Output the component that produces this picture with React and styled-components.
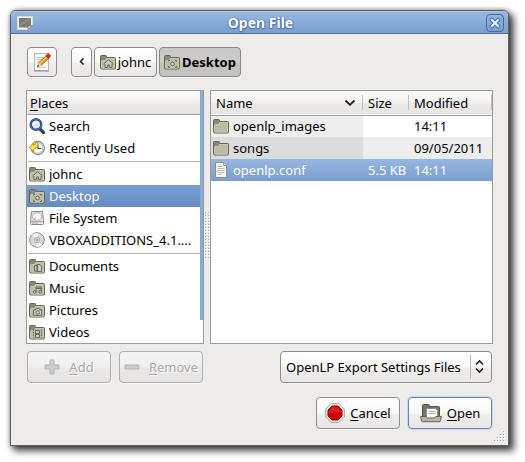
import React, { useState } from "react";
import styled, { createGlobalStyle, css } from "styled-components";

const GlobalStyle = createGlobalStyle`
  * { box-sizing: border-box; }
  body {
    margin: 0;
    background: #fff;
    color: #000;
    font: 13px/16px "Noto Sans", "Open Sans", sans-serif;
  }
  button, select { font: inherit; color: inherit; margin: 0; }
  u { text-decoration-thickness: 1px; text-underline-offset: 2px; }
`;

const Page = styled.div`
  padding: 10px 16px 16px 10px;
`;

const Window = styled.section`
  border: 1px solid #5f5e5c;
  border-radius: 6px 6px 0 0;
  background: #edeceb;
  box-shadow: 4px 4px 7px 1px rgba(0, 0, 0, 0.7), 0 0 4px rgba(0, 0, 0, 0.4);
`;

const TitleBar = styled.header`
  display: grid;
  grid-template-columns: 24px 1fr 24px;
  align-items: center;
  height: 23px;
  padding: 0 4px 0 6px;
  border-top: 1px solid #a9c5ea;
  border-bottom: 1px solid #4b6fa5;
  border-radius: 5px 5px 0 0;
  background: linear-gradient(#97b8e2, #7a9fd0);
`;

const Title = styled.h1`
  margin: 0;
  font-size: 14px;
  line-height: 20px;
  font-weight: 700;
  text-align: center;
  color: #fff;
  text-shadow: 0 0 1px #41659a, 0 1px 2px #41659a, 1px 0 1px #5478ad;
`;

const CloseButton = styled.button`
  display: grid;
  place-items: center;
  justify-self: end;
  width: 18px;
  height: 18px;
  padding: 0;
  border: 1px solid #45699f;
  border-radius: 4px;
  background: linear-gradient(#94b5e0, #7b9fcf);
`;

const Content = styled.div`
  display: flex;
  flex-direction: column;
  padding: 13px 15px 0;
`;

const PathBar = styled.nav`
  display: flex;
  gap: 2px;
  padding-left: 1px;
  margin-bottom: 13px;
`;

const PushButton = styled.button`
  display: flex;
  align-items: center;
  justify-content: center;
  gap: ${(p) => p.$gap || 3}px;
  min-width: 0;
  height: ${(p) => (p.$tall ? 32 : 30)}px;
  padding: 0 4px;
  border: 1px solid #8f8d89;
  border-radius: 4px;
  background: linear-gradient(#fff, #f8f8f7 50%, #efeeed 55%, #e8e7e5);
  box-shadow: 0 1px 0 #f8f8f8;
  white-space: nowrap;

  ${(p) => p.$active && css`
    border-color: #8a8884;
    background: linear-gradient(#c9c7c5, #cfcdcb 50%, #c4c2bf 55%, #c6c4c1);
    font-weight: 700;
  `}
  ${(p) => p.$primary && css`
    border-color: #6685b5;
    box-shadow: 0 0 0 1px #c9d8ec;
  `}
  &:disabled {
    border-color: #b1afac;
    background: linear-gradient(#f6f5f5, #f0efee 50%, #e9e8e7 55%, #e5e4e2);
    color: #aaa8a5;
    text-shadow: 1px 1px 0 #fff;
  }
`;

const EditButton = styled(PushButton)`
  width: 30px;
  margin-right: 12px;
`;
const BackButton = styled(PushButton)`
  width: 21px;
`;
const CrumbButton = styled(PushButton)`
  flex: 0 0 auto;
  width: ${(p) => (p.$active ? 82 : 63)}px;
  gap: 2px;
  svg { flex: none; }
`;

const Panes = styled.div`
  display: flex;
  align-items: stretch;
`;

const headerFill = css`
  height: 24px;
  border-bottom: 1px solid #a09e9b;
  background: linear-gradient(#fbfbfa, #f3f2f1 50%, #ebeae9 55%, #e6e5e3);
`;

const Places = styled.aside`
  position: relative;
  flex: 0 0 178px;
  border: 1px solid #9c9a97;
  background: #fff;
`;

const PlacesHeader = styled.h2`
  ${headerFill}
  margin: 0;
  padding: 4px 3px;
  font: inherit;
`;

const ScrollMark = styled.span`
  position: absolute;
  top: 0;
  right: 0;
  width: 3px;
  height: 91%;
  background: #86abd9;
`;

const PlaceGroup = styled.ul`
  list-style: none;
  margin: 0 3px 0 0;
  padding: 0;
  & + & { padding-top: 4px; background: linear-gradient(#b6b4b2, #b6b4b2) 1px 2px / 100% 1px no-repeat; }
`;

const PlaceButton = styled.button`
  display: flex;
  align-items: center;
  gap: 4px;
  width: 100%;
  height: 22px;
  padding: 0 0 0 2px;
  border: 0;
  background: ${(p) => (p.$selected ? "linear-gradient(#7ba0d2, #648bc2)" : "none")};
  color: ${(p) => (p.$selected ? "#fff" : "#000")};
  text-align: left;
  svg { flex: none; }
`;

const PlaceName = styled.span`
  overflow: hidden;
  text-overflow: ellipsis;
  white-space: nowrap;
`;

const Splitter = styled.div`
  flex: 0 0 6px;
  display: grid;
  justify-content: center;
  align-self: center;
  margin-top: 38px;
`;

const Files = styled.div`
  flex: 1 1 0;
  min-width: 0;
  border: 1px solid #9c9a97;
  background: #fff;
`;

const FileTable = styled.table`
  width: 100%;
  table-layout: fixed;
  border-collapse: collapse;
`;

const FileHead = styled.tr`
  ${headerFill}
`;

const HeadCell = styled.th`
  width: ${(p) => p.$width || "auto"};
  height: 24px;
  padding: 0 0 0 5px;
  font-weight: 400;
  text-align: left;
  background: linear-gradient(#bfbdba, #bfbdba) 100% 4px / 1px 15px no-repeat;
`;

const SortButton = styled.button`
  display: flex;
  align-items: center;
  justify-content: space-between;
  width: 100%;
  padding: 0 7px 0 0;
  border: 0;
  background: none;
`;

const FileRow = styled.tr`
  height: 22px;
  background: ${(p) => (p.$selected ? "linear-gradient(#96b7e1, #799dce)" : p.$odd ? "#ededed" : "#fff")};
  color: ${(p) => (p.$selected ? "#fff" : "#000")};
`;

const Cell = styled.td`
  padding: 0 3px 0 5px;
  text-align: ${(p) => (p.$right ? "right" : "left")};
  white-space: nowrap;
`;

const NameCell = styled(Cell)`
  padding-left: 2px;
  background: ${(p) => (p.$selected ? "none" : p.$odd ? "#dcdcdc" : "#ededed")};
`;

const FileName = styled.span`
  display: flex;
  align-items: center;
  gap: 4px;
`;

const Tools = styled.div`
  display: flex;
  gap: 8px;
  padding: 7px 1px 0;
`;

const Action = styled(PushButton)`
  width: 84px;
`;

const FilterBox = styled.label`
  display: grid;
  align-items: center;
  width: 212px;
  margin-left: auto;
  > * { grid-area: 1 / 1; }
  > svg { justify-self: end; pointer-events: none; }
`;

const FilterSelect = styled.select`
  appearance: none;
  width: 100%;
  height: 32px;
  padding: 0 20px 0 5px;
  border: 1px solid #8f8d89;
  border-radius: 4px;
  background: linear-gradient(#fff, #f8f8f7 50%, #efeeed 55%, #e8e7e5);
  box-shadow: 0 1px 0 #f8f8f8;
`;

const Footer = styled.footer`
  display: flex;
  justify-content: flex-end;
  gap: 8px;
  padding: 14px 1px 0;
`;

const GripRow = styled.div`
  display: flex;
  justify-content: flex-end;
  height: 16px;
  padding: 2px 3px 0 0;
`;

function FolderIcon({ emblem }) {
  return (
    <svg width="16" height="16" viewBox="0 0 16 16" aria-hidden="true">
      <path d="M.5 13.500V2.500q0-1 1-1h4.200q.8 0 .8 1v1h8q1 0 1 1v9.200q0 1.300-1.300 1.300H1.800Q.5 15 .5 13.500Z" fill="#878b75" stroke="#62664f" />
      <path d="M1.500 13.500v-6q0-1 1-1h3l1-2h8v9q0 .7-.8.7H2.300q-.8 0-.8-.7Z" fill="#b9bca6" stroke="#d0d2c3" strokeWidth=".8" />
      {emblem === "home" && <path d="M3.500 10 8.500 5.800 13.500 10M5 10v3.500h2.500V11h2v2.500H12V10" fill="#c9ccba" stroke="#65695a" strokeWidth="1" />}
      {emblem === "desktop" && (
        <g fill="none" stroke="#65695a">
          <path d="M4.500 7.500v-1h1.500M11 6.500h1.500v1M4.500 12v1.500H6M11 13.500h1.500V12" />
          <circle cx="8.500" cy="10" r="1.800" fill="#d8dacd" />
        </g>
      )}
      {emblem === "docs" && <path d="M5.500 7.500h3v5.500h-3ZM8 6.500h3l1.500 1.500v5.500H8Z" fill="#ced0c0" stroke="#65695a" />}
      {emblem === "music" && (
        <g fill="#d2d4c5" stroke="#65695a">
          <path d="M7 12V7h5.500v4.500M7 8.500h5.500" fill="none" />
          <circle cx="5.700" cy="12" r="1.300" /><circle cx="11.200" cy="11.700" r="1.300" />
        </g>
      )}
      {emblem === "pictures" && (
        <g fill="#cfd1c2" stroke="#65695a">
          <path d="M4.500 8h2l.7-1.500h3L11 8h1.800v5.300H4.500Z" /><circle cx="8.700" cy="10.500" r="1.800" />
        </g>
      )}
      {emblem === "videos" && (
        <g fill="#cfd1c2" stroke="#65695a">
          <path d="M4.500 5.500v9M12.500 5.500v9" strokeDasharray="1.500 1" />
          <path d="M6.500 6.500h4v3h-4ZM6.500 10.500h4v3h-4Z" />
        </g>
      )}
    </svg>
  );
}

function SearchIcon() {
  return (
    <svg width="16" height="16" viewBox="0 0 16 16" aria-hidden="true">
      <path d="m10.500 10.500 4 4" stroke="#3d3f43" strokeWidth="3.200" strokeLinecap="round" />
      <circle cx="7" cy="6.500" r="5.300" fill="#dde9f5" stroke="#26458f" strokeWidth="2.400" />
      <circle cx="7" cy="6.500" r="5.500" fill="none" stroke="#5c82cc" strokeWidth=".7" />
      <path d="M4 7q0-3.300 3-3.800 2 0 2.500 1.500Q5.500 5 4 7Z" fill="#fff" />
    </svg>
  );
}

function RecentIcon() {
  return (
    <svg width="16" height="16" viewBox="0 0 16 16" aria-hidden="true">
      <circle cx="8.800" cy="8" r="6.600" fill="#efefed" stroke="#85857f" strokeWidth="1.200" />
      <circle cx="8.800" cy="8" r="5" fill="#fff" stroke="#b9b9b4" strokeWidth=".8" />
      <path d="M9 4.500V8.500h3.500" fill="none" stroke="#555" strokeWidth="1.200" />
      <path d="M.5 7.500 4.500 3v2.300Q7.500 3.500 8.500 1.500q1.300 6-4 8v2.200Z" fill="#f6e04c" stroke="#b99c12" strokeWidth=".9" />
    </svg>
  );
}

function DriveIcon() {
  return (
    <svg width="16" height="16" viewBox="0 0 16 16" aria-hidden="true">
      <path d="M2.500 1.500h11l1 9v3q0 1-1 1h-11q-1 0-1-1v-3Z" fill="#e6e6e4" stroke="#8a8a86" />
      <ellipse cx="8" cy="6.500" rx="4.500" ry="3.700" fill="#f8f8f8" stroke="#b5b5b2" />
      <path d="M2 11.500h12M7 7.500l-3.500 3" stroke="#aaa" fill="none" />
      <path d="M3.500 13h6" stroke="#777" strokeDasharray="1 1" />
    </svg>
  );
}

function DiscIcon() {
  return (
    <svg width="16" height="16" viewBox="0 0 16 16" aria-hidden="true">
      <circle cx="8" cy="8" r="7.300" fill="#dadad8" stroke="#888885" />
      <path d="M8 8 3 2.800Q6 .8 9 1.200ZM8 8l5 5.200q-3 2-6 1.500Z" fill="#f8f8f8" />
      <circle cx="8" cy="8" r="2.800" fill="#f0f0ee" stroke="#999" strokeWidth=".8" />
      <circle cx="8" cy="8" r="1.100" fill="#fff" stroke="#777" strokeWidth=".8" />
    </svg>
  );
}

function FileIcon() {
  return (
    <svg width="16" height="16" viewBox="0 0 16 16" aria-hidden="true">
      <path d="M2.500.5h8l3 3v12h-11Z" fill="#f5f5f3" stroke="#8d8e88" />
      <path d="M10.500.5v3h3" fill="#fff" stroke="#aaa" />
      <path d="M4.500 4.500h5M4.500 6.500h7M4.500 8.500h7M4.500 10.500h7M4.500 12.500h4" stroke="#bcbdb9" />
    </svg>
  );
}

function EditIcon() {
  return (
    <svg width="20" height="20" viewBox="0 0 20 20" aria-hidden="true">
      <path d="M2.500 1.500h14v17h-14Z" fill="#fafafa" stroke="#b5b5b2" />
      <path d="M2 19h15" stroke="#8a8a88" />
      <path d="M5 5.500h7M5 7.500h5M5 9.500h3M5 11.500h2M5 15.500h9" stroke="#c4c4c4" />
      <path d="M5.500 14.500 7 10.500l7.500-7.300 2.700 2.700-7.700 7.300Z" fill="#f39a2b" stroke="#a8651b" strokeWidth=".8" />
      <path d="m8 11.500 7.500-7.300" stroke="#ffd68a" />
      <path d="m5.500 14.500 1.500-4 2.500 2.700Z" fill="#f3dfb5" />
      <path d="m5.200 14.800.8-2 1.200 1.300Z" fill="#222" />
      <path d="m13.800 3.800 1.700-1.600q1-.9 2 .1l.6.7q.8.900 0 1.800L16.400 6.500Z" fill="#dc2c23" stroke="#9e1712" strokeWidth=".6" />
    </svg>
  );
}

function WindowIcon() {
  return (
    <svg width="16" height="14" viewBox="0 0 16 14" aria-hidden="true">
      <path d="M.5.500h15v9l-3.500 4H.5Z" fill="#f5f5f2" stroke="#dcdcd7" />
      <path d="M2 2h12v7l-3 2.500H2Z" fill="#797b74" />
      <path d="M2 10 13 2.500" stroke="#8c8e87" strokeWidth="2" />
      <path d="M11 13.500v-3.700h4.500Z" fill="#e5e5e1" stroke="#62645c" strokeWidth=".8" />
    </svg>
  );
}

function CloseIcon() {
  return (
    <svg width="12" height="12" viewBox="0 0 12 12" aria-hidden="true">
      <path d="m3 3 6 6m0-6L3 9" stroke="#45699f" strokeWidth="4" strokeLinecap="square" />
      <path d="m3 3 6 6m0-6L3 9" stroke="#e9f0fa" strokeWidth="2.200" strokeLinecap="square" />
    </svg>
  );
}

function BackIcon() {
  return (
    <svg width="8" height="10" viewBox="0 0 8 10" aria-hidden="true">
      <path d="M5.500 1.500 2.500 4.500l3 3" fill="none" stroke="#1c1c1c" strokeWidth="1.500" />
    </svg>
  );
}

function SortIcon() {
  return (
    <svg width="12" height="8" viewBox="0 0 12 8" aria-hidden="true">
      <path d="M1.500 1.500 6 5.800l4.500-4.300" fill="none" stroke="#1c1c1c" strokeWidth="1.800" />
    </svg>
  );
}

function ComboArrows() {
  return (
    <svg width="22" height="24" viewBox="0 0 22 24" aria-hidden="true">
      <path d="M.5 0v24" stroke="#bcbab7" />
      <path d="m6 9.500 3.500-3.500L13 9.500M6 13.500 9.500 17l3.500-3.500" fill="none" stroke="#1c1c1c" strokeWidth="1.600" />
    </svg>
  );
}

function AddIcon({ minus }) {
  return (
    <svg width="16" height="16" viewBox="0 0 16 16" aria-hidden="true">
      <path
        d={minus ? "M1.500 6h13q.5 0 .5.500v3q0 .5-.5.500h-13q-.5 0-.5-.5v-3q0-.5.5-.5Z" : "M6 1.500q0-.5.500-.5h3q.5 0 .5.500V6h4.500q.5 0 .5.500v3q0 .5-.5.500H10v4.500q0 .5-.5.500h-3q-.5 0-.5-.5V10H1.500Q1 10 1 9.500v-3Q1 6 1.500 6H6Z"}
        fill="#cbcccd"
        stroke="#b0b1b2"
      />
    </svg>
  );
}

function StopIcon() {
  return (
    <svg width="20" height="20" viewBox="0 0 20 20" aria-hidden="true">
      <path d="M6 .7h8L19.300 6v8L14 19.300H6L.7 14V6Z" fill="#eeeeec" stroke="#a2a49f" />
      <path d="M7 3h6l4 4v6l-4 4H7l-4-4V7Z" fill="#cc0000" stroke="#a00000" />
      <path d="M7.300 4h5.400L16 7.300V9L4 10V7.300Z" fill="#df1c1c" />
    </svg>
  );
}

function OpenIcon() {
  return (
    <svg width="22" height="20" viewBox="0 0 22 20" aria-hidden="true">
      <path d="M2.500 14V2.500q0-1 1-1h5q1 0 1 1v1h9q1 0 1 1V14Z" fill="#737866" stroke="#4f5344" />
      <path d="M6.500 5.500h9l2 2v8h-11Z" fill="#fafaf9" stroke="#8a8c84" />
      <path d="M8.500 8.500h7M8.500 10.500h7" stroke="#aaa" />
      <path d="M.7 13.500h5.600l1 1.500h7.500l1-1.500h5.500L20.500 18q-.2.700-1 .7H2.500q-.8 0-1-.7Z" fill="#b5b8a6" stroke="#62664f" />
    </svg>
  );
}

function Dots({ width, height, points }) {
  return (
    <svg width={width} height={height} viewBox={`0 0 ${width} ${height}`} aria-hidden="true">
      {points.map(([x, y]) => (
        <g key={`${x}-${y}`}>
          <rect x={x + 1} y={y + 1} width="1" height="1" fill="#fff" />
          <rect x={x} y={y} width="1" height="1" fill="#a9a7a4" />
        </g>
      ))}
    </svg>
  );
}

const gripDots = [[10, 0], [7, 3], [10, 3], [4, 6], [7, 6], [10, 6], [1, 9], [4, 9], [7, 9], [10, 9]];
const splitterDots = Array.from({ length: 16 }, (_, i) => [[0, i * 3], [3, i * 3]]).flat();

const groups = [
  [
    { name: "Search", icon: <SearchIcon /> },
    { name: "Recently Used", icon: <RecentIcon /> },
  ],
  [
    { name: "johnc", icon: <FolderIcon emblem="home" /> },
    { name: "Desktop", icon: <FolderIcon emblem="desktop" /> },
    { name: "File System", icon: <DriveIcon /> },
    { name: "VBOXADDITIONS_4.1....", icon: <DiscIcon /> },
  ],
  [
    { name: "Documents", icon: <FolderIcon emblem="docs" /> },
    { name: "Music", icon: <FolderIcon emblem="music" /> },
    { name: "Pictures", icon: <FolderIcon emblem="pictures" /> },
    { name: "Videos", icon: <FolderIcon emblem="videos" /> },
  ],
];

const files = [
  { name: "openlp_images", size: "", modified: "14:11", icon: <FolderIcon /> },
  { name: "songs", size: "", modified: "09/05/2011", icon: <FolderIcon /> },
  { name: "openlp.conf", size: "5.5 KB", modified: "14:11", icon: <FileIcon /> },
];

export default function App() {
  const [place, setPlace] = useState("Desktop");
  const [file, setFile] = useState("openlp.conf");

  return (
    <Page>
      <GlobalStyle />
      <Window aria-labelledby="title">
        <TitleBar>
          <WindowIcon />
          <Title id="title">Open File</Title>
          <CloseButton type="button" aria-label="Close"><CloseIcon /></CloseButton>
        </TitleBar>
        <Content>
          <PathBar aria-label="Path">
            <EditButton type="button" aria-label="Type a file name"><EditIcon /></EditButton>
            <BackButton type="button" aria-label="Back"><BackIcon /></BackButton>
            <CrumbButton type="button"><FolderIcon emblem="home" />johnc</CrumbButton>
            <CrumbButton type="button" $active><FolderIcon emblem="desktop" />Desktop</CrumbButton>
          </PathBar>
          <Panes>
            <Places>
              <PlacesHeader><u>P</u>laces</PlacesHeader>
              {groups.map((group) => (
                <PlaceGroup key={group[0].name}>
                  {group.map((p) => (
                    <li key={p.name}>
                      <PlaceButton type="button" $selected={p.name === place} onClick={() => setPlace(p.name)}>
                        {p.icon}
                        <PlaceName>{p.name}</PlaceName>
                      </PlaceButton>
                    </li>
                  ))}
                </PlaceGroup>
              ))}
              <ScrollMark />
            </Places>
            <Splitter><Dots width={5} height={48} points={splitterDots} /></Splitter>
            <Files>
              <FileTable>
                <thead>
                  <FileHead>
                    <HeadCell><SortButton type="button">Name<SortIcon /></SortButton></HeadCell>
                    <HeadCell $width="46px">Size</HeadCell>
                    <HeadCell $width="83px">Modified</HeadCell>
                  </FileHead>
                </thead>
                <tbody>
                  {files.map((f, i) => (
                    <FileRow key={f.name} $selected={f.name === file} $odd={i % 2 === 1} onClick={() => setFile(f.name)}>
                      <NameCell $selected={f.name === file} $odd={i % 2 === 1}>
                        <FileName>{f.icon}{f.name}</FileName>
                      </NameCell>
                      <Cell $right>{f.size}</Cell>
                      <Cell>{f.modified}</Cell>
                    </FileRow>
                  ))}
                </tbody>
              </FileTable>
            </Files>
          </Panes>
          <Tools>
            <Action type="button" $tall $gap={9} disabled><AddIcon /><span><u>A</u>dd</span></Action>
            <Action type="button" $tall $gap={9} disabled><AddIcon minus /><span><u>R</u>emove</span></Action>
            <FilterBox>
              <FilterSelect aria-label="File type" defaultValue="settings">
                <option value="settings">OpenLP Export Settings Files</option>
              </FilterSelect>
              <ComboArrows />
            </FilterBox>
          </Tools>
          <Footer>
            <Action type="button" $tall $gap={5}><StopIcon /><span><u>C</u>ancel</span></Action>
            <Action type="button" $tall $gap={5} $primary><OpenIcon /><span><u>O</u>pen</span></Action>
          </Footer>
        </Content>
        <GripRow><Dots width={12} height={12} points={gripDots} /></GripRow>
      </Window>
    </Page>
  );
}
